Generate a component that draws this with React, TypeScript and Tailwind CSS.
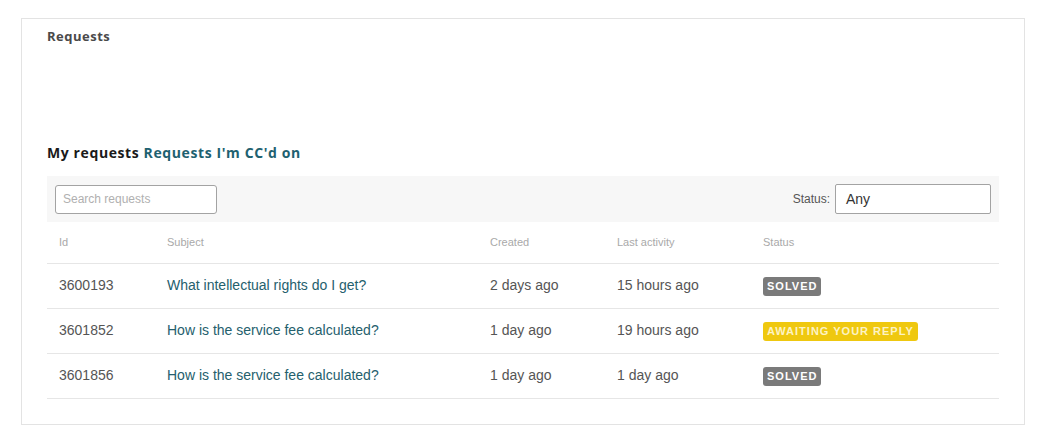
const rows = [
  { id: "3600193", subject: "What intellectual rights do I get?", created: "2 days ago", last: "15 hours ago", status: "solved" },
  { id: "3601852", subject: "How is the service fee calculated?", created: "1 day ago", last: "19 hours ago", status: "awaiting" },
  { id: "3601856", subject: "How is the service fee calculated?", created: "1 day ago", last: "1 day ago", status: "solved" },
]

function Badge({ status }: { status: string }) {
  if (status === "awaiting") {
    return (
      <span className="inline-block h-[19px] leading-[19px] px-[4px] rounded-[3px] bg-[#efc80f] text-[#fdf3c4] text-[11px] font-bold tracking-[1px]">
        AWAITING YOUR REPLY
      </span>
    )
  }
  return (
    <span className="inline-block h-[19px] leading-[19px] px-[4px] rounded-[3px] bg-[#7a7a7a] text-white text-[11px] font-bold tracking-[1px]">
      SOLVED
    </span>
  )
}

export default function App() {
  return (
    <div className="bg-white min-h-[444px] pt-[18px] pl-[21px]">
      <div className="w-[1004px] h-[407px] border border-[#e3e3e3] px-[25px] pt-[7px]">
        <h2 className="font-['Open_Sans',sans-serif] font-bold text-[13px] leading-[20px] tracking-[0.5px] text-[#4a4a4a]">Requests</h2>

        <div className="mt-[97px] font-['Open_Sans',sans-serif] font-bold text-[14px] leading-[20px] tracking-[0.6px]">
          <span className="text-[#1a1a1a]">My requests</span>{" "}
          <a className="text-[#1e6170]">Requests I'm CC'd on</a>
        </div>

        <div className="mt-[13px] w-[952px] font-['Liberation_Sans',Arial,sans-serif]">
          <div className="h-[46px] bg-[#f7f7f7] flex items-center justify-between pl-[8px] pr-[8px]">
            <input
              placeholder="Search requests"
              className="w-[162px] h-[29px] border border-[#a3a3a3] rounded-[3px] bg-white px-[7px] text-[12px] text-[#333] placeholder:text-[#b0b0b0] outline-none"
            />
            <div className="flex items-center gap-[5px]">
              <span className="text-[12px] text-[#555]">Status:</span>
              <div className="w-[156px] h-[30px] border border-[#a3a3a3] rounded-[2px] bg-white px-[10px] flex items-center text-[14px] text-[#333]">
                Any
              </div>
            </div>
          </div>

          <table className="w-full border-collapse">
            <thead>
              <tr className="h-[41px] border-b border-[#e6e6e6] text-left text-[11px] text-[#a9a9a9]">
                <th className="font-normal pl-[12px] w-[120px]">Id</th>
                <th className="font-normal w-[323px]">Subject</th>
                <th className="font-normal w-[127px]">Created</th>
                <th className="font-normal w-[146px]">Last activity</th>
                <th className="font-normal">Status</th>
              </tr>
            </thead>
            <tbody>
              {rows.map((r) => (
                <tr key={r.id} className="h-[45px] border-b border-[#e6e6e6] text-[14px] text-[#555]">
                  <td className="pl-[12px]">{r.id}</td>
                  <td className="text-[#25606d]">{r.subject}</td>
                  <td>{r.created}</td>
                  <td>{r.last}</td>
                  <td><Badge status={r.status} /></td>
                </tr>
              ))}
            </tbody>
          </table>
        </div>
      </div>
    </div>
  )
}
